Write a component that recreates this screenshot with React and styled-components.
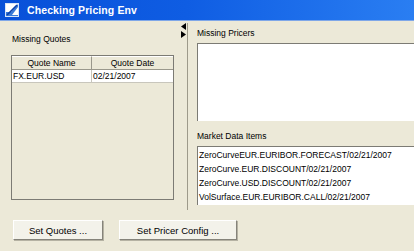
import React from "react";
import styled, { createGlobalStyle } from "styled-components";

const Global = createGlobalStyle`
  html, body { margin: 0; padding: 0; background: #ECE9D8; }
  * { box-sizing: border-box; }
`;

const Window = styled.div`
  width: 414px;
  height: 251px;
  background: #ECE9D8;
  overflow: hidden;
  display: flex;
  flex-direction: column;
  font-family: "Liberation Sans", Arial, sans-serif;
  font-size: 8.5px;
  color: #000;
`;

const TitleBar = styled.div`
  height: 21px;
  flex: none;
  display: flex;
  align-items: center;
  gap: 8px;
  padding-left: 5px;
  background: linear-gradient(to right, #0850D8 0%, #0F5DE3 45%, #2A7EF2 100%);
  border-bottom: 1px solid #7FA7E8;
`;

const TitleText = styled.span`
  color: #fff;
  font-weight: bold;
  font-size: 10.5px;
  letter-spacing: 0.1px;
`;

const Content = styled.div`
  display: flex;
  height: 190px;
  flex: none;
`;

const LeftPane = styled.div`
  width: 178px;
  flex: none;
  padding: 12px 0 0 11px;
  display: flex;
  flex-direction: column;
`;

const Label = styled.div`
  line-height: 12px;
  height: 12px;
  margin-bottom: ${(p) => p.$mb || 4}px;
  margin-top: ${(p) => p.$mt || 0}px;
  padding-left: ${(p) => p.$pl || 0}px;
  white-space: nowrap;
`;

const TableBox = styled.div`
  width: 163px;
  height: 145px;
  border: 1px solid #7C7B74;
  background: #ECE9D8;
`;

const Row = styled.div`
  display: grid;
  grid-template-columns: 80px 1fr;
  height: ${(p) => (p.$header ? 14 : 13)}px;
  background: ${(p) => (p.$header ? "#ECE9D8" : "#fff")};
  border-bottom: 1px solid ${(p) => (p.$header ? "#9A988C" : "#C8C6BC")};
`;

const Cell = styled.div`
  display: flex;
  align-items: center;
  justify-content: ${(p) => (p.$center ? "center" : "flex-start")};
  padding-left: ${(p) => (p.$center ? 0 : 1)}px;
  border-right: 1px solid ${(p) => (p.$header ? "#9A988C" : "#C8C6BC")};
  border-top: ${(p) => (p.$header ? "1px solid #fff" : "none")};
  white-space: nowrap;
  overflow: hidden;
  &:last-child { border-right: none; }
`;

const Divider = styled.div`
  width: 10px;
  flex: none;
  margin-top: 2px;
  height: 187px;
  border-right: 1px solid #9D9A8A;
  display: flex;
  flex-direction: column;
  padding-left: 3px;
  gap: 1px;
`;

const RightPane = styled.div`
  flex: 1;
  padding: 6px 0 0 9px;
  display: flex;
  flex-direction: column;
  overflow: hidden;
`;

const WhiteBox = styled.div`
  width: 230px;
  height: ${(p) => p.$h}px;
  background: #fff;
  border-top: 1px solid #7C7B74;
  border-left: 1px solid #7C7B74;
  padding: 1px 0 0 1px;
  flex: none;
`;

const ListItem = styled.div`
  height: 14px;
  line-height: 14px;
  white-space: nowrap;
`;

const ButtonBar = styled.div`
  display: flex;
  gap: 16px;
  padding: 9px 0 0 13px;
`;

const Button = styled.button`
  width: ${(p) => p.$w}px;
  height: 20px;
  font-family: "Liberation Sans", Arial, sans-serif;
  font-size: 9.5px;
  color: #000;
  background: #F3F2EA;
  border: 1px solid;
  border-color: #FFFFFF #85837A #85837A #FFFFFF;
  box-shadow: 1px 1px 0 #B5B2A3;
  padding: 0;
  display: flex;
  align-items: center;
  justify-content: center;
`;

const Arrow = ({ dir }) => (
  <svg width="5" height="7" viewBox="0 0 5 7">
    {dir === "left" ? (
      <polygon points="5,0 5,7 0,3.5" fill="#000" />
    ) : (
      <polygon points="0,0 0,7 5,3.5" fill="#000" />
    )}
  </svg>
);

const AppIcon = () => (
  <svg width="14" height="14" viewBox="0 0 14 14">
    <rect x="0" y="0" width="14" height="14" fill="#fff" />
    <polygon points="0,14 0,9 6,9 13,1 13,4 7,12 14,12 14,14" fill="#3A7BD8" />
    <line x1="2" y1="12" x2="12" y2="2" stroke="#0B3FA8" strokeWidth="1.6" />
    <rect x="0.5" y="0.5" width="13" height="13" fill="none" stroke="#D8E4F6" />
  </svg>
);

const items = [
  "ZeroCurveEUR.EURIBOR.FORECAST/02/21/2007",
  "ZeroCurve.EUR.DISCOUNT/02/21/2007",
  "ZeroCurve.USD.DISCOUNT/02/21/2007",
  "VolSurface.EUR.EURIBOR.CALL/02/21/2007",
];

export default function App() {
  return (
    <>
      <Global />
      <Window>
        <TitleBar>
          <AppIcon />
          <TitleText>Checking Pricing Env</TitleText>
        </TitleBar>
        <Content>
          <LeftPane>
            <Label $mb={10} $pl={1}>Missing Quotes</Label>
            <TableBox>
              <Row $header>
                <Cell $header $center>Quote Name</Cell>
                <Cell $header $center>Quote Date</Cell>
              </Row>
              <Row>
                <Cell>FX.EUR.USD</Cell>
                <Cell>02/21/2007</Cell>
              </Row>
            </TableBox>
          </LeftPane>
          <Divider>
            <Arrow dir="left" />
            <Arrow dir="right" />
          </Divider>
          <RightPane>
            <Label $mb={4}>Missing Pricers</Label>
            <WhiteBox $h={78} />
            <Label $mt={9} $mb={4}>Market Data Items</Label>
            <WhiteBox $h={59}>
              {items.map((t) => (
                <ListItem key={t}>{t}</ListItem>
              ))}
            </WhiteBox>
          </RightPane>
        </Content>
        <ButtonBar>
          <Button $w={90}>Set Quotes ...</Button>
          <Button $w={118}>Set Pricer Config ...</Button>
        </ButtonBar>
      </Window>
    </>
  );
}
